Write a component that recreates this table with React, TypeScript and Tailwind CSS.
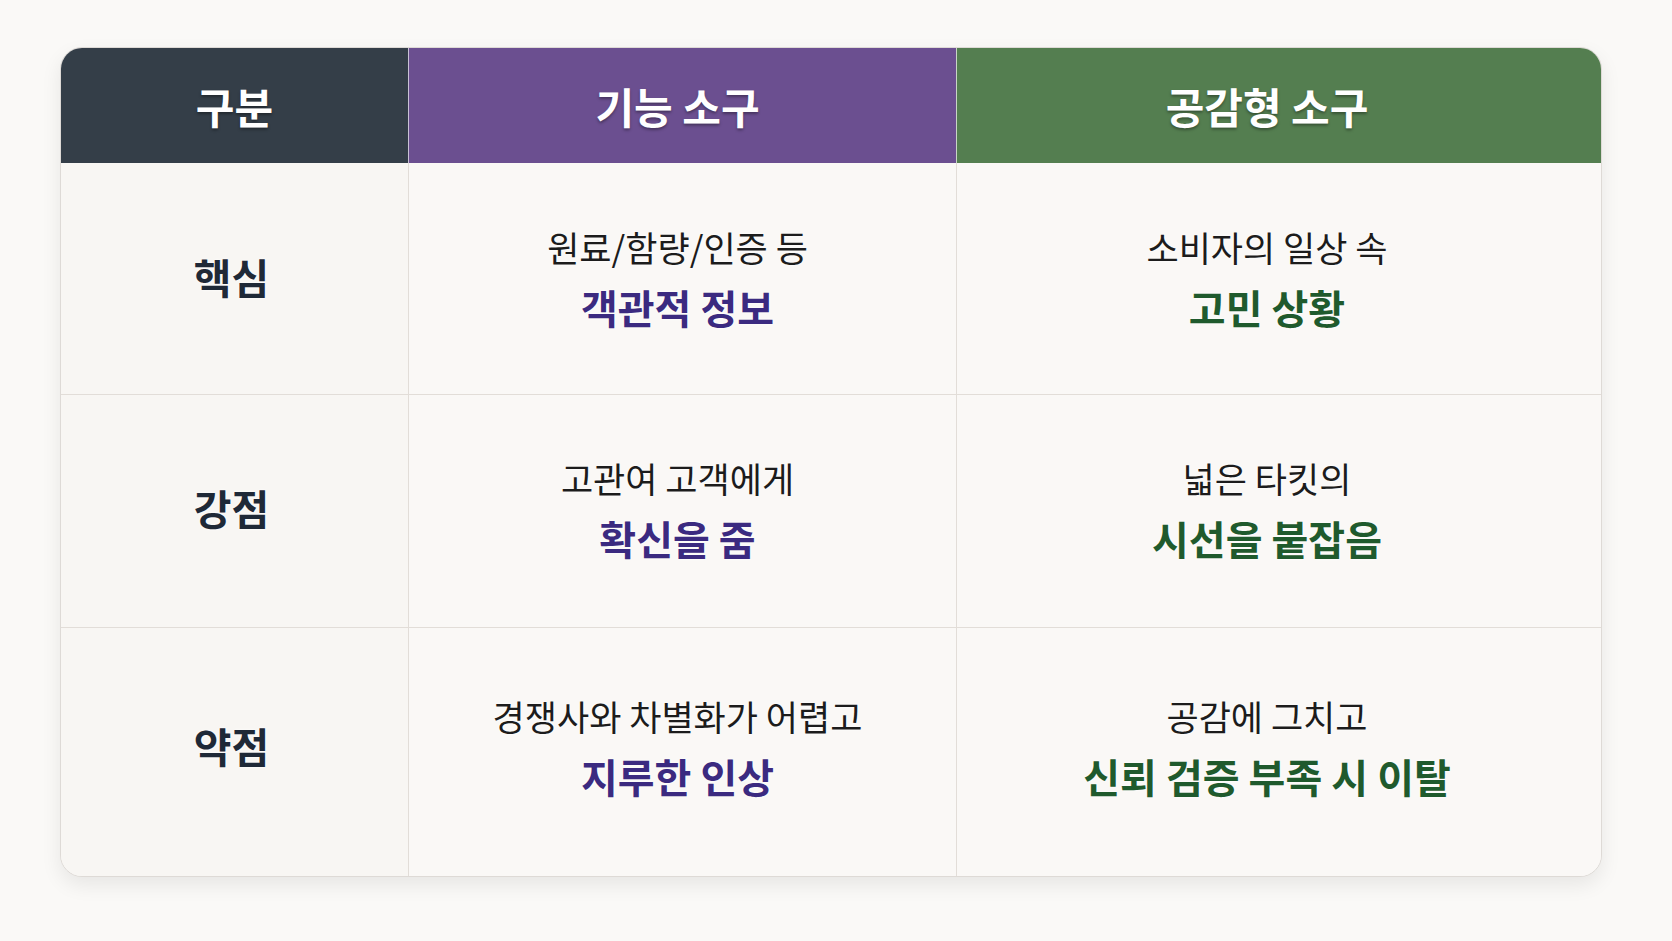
import React from "react";

type Row = {
  label: string;
  func: [string, string];
  emp: [string, string];
  height: string;
  pad: string;
};

const rows: Row[] = [
  { label: "핵심", func: ["원료/함량/인증 등", "객관적 정보"], emp: ["소비자의 일상 속", "고민 상황"], height: "h-[231px]", pad: "pb-[4px]" },
  { label: "강점", func: ["고관여 고객에게", "확신을 줌"], emp: ["넓은 타킷의", "시선을 붙잡음"], height: "h-[233px]", pad: "pb-[6px]" },
  { label: "약점", func: ["경쟁사와 차별화가 어렵고", "지루한 인상"], emp: ["공감에 그치고", "신뢰 검증 부족 시 이탈"], height: "h-[249px]", pad: "pb-[12px]" },
];

const font = { fontFamily: '"Noto Sans CJK KR", "Noto Sans", sans-serif' };

function Cell({ lines, tone, pad }: { lines: [string, string]; tone: "purple" | "green"; pad: string }) {
  return (
    <div
      className={
        tone === "purple"
          ? `flex flex-col items-center justify-center gap-[12px] border-l border-[#e2ddd8] bg-[#faf8f6] pr-[10px] ${pad}`
          : `flex flex-col items-center justify-center gap-[12px] border-l border-[#e2ddd8] bg-[#faf8f6] pr-[24px] ${pad}`
      }
    >
      <p className="text-[35px] leading-[48px] text-[#1c1c1c] [text-shadow:0_0_3px_#ffffff]">{lines[0]}</p>
      <p
        className={
          tone === "purple"
            ? "text-[40px] font-bold leading-[48px] text-[#3b2a80] [text-shadow:0_0_3px_#ffffff]"
            : "text-[40px] font-bold leading-[48px] text-[#1f5a2d] [text-shadow:0_0_3px_#ffffff]"
        }
      >
        {lines[1]}
      </p>
    </div>
  );
}

export default function App() {
  return (
    <div className="min-h-screen w-full bg-[#faf9f7] pt-[47px] pl-[60px]" style={font}>
      <div className="w-[1542px] overflow-hidden rounded-[22px] border border-[#dedad6] bg-[#faf8f6] shadow-[0_8px_20px_rgba(0,0,0,0.08)]">
        <div className="grid h-[115px] grid-cols-[347px_548px_1fr] text-white">
          <div className="flex items-center justify-center bg-[#343e48] text-[42px] font-bold [text-shadow:0_2px_3px_rgba(0,0,0,0.35)]">
            구분
          </div>
          <div className="flex items-center justify-center border-l border-[#c9c1d6] bg-[#6b4f90] pr-[10px] text-[42px] font-bold [text-shadow:0_2px_3px_rgba(0,0,0,0.35)]">
            기능 소구
          </div>
          <div className="flex items-center justify-center border-l border-[#c9d4c6] bg-[#547e50] pr-[24px] text-[42px] font-bold [text-shadow:0_2px_3px_rgba(0,0,0,0.35)]">
            공감형 소구
          </div>
        </div>
        {rows.map((row, i) => (
          <div
            key={row.label}
            className={
              i === 0
                ? `grid ${row.height} grid-cols-[347px_548px_1fr]`
                : `grid ${row.height} grid-cols-[347px_548px_1fr] border-t border-[#e2ddd8]`
            }
          >
            <div
              className={`flex items-center justify-center bg-[#f8f6f3] pr-[6px] text-[41px] font-bold text-[#1f2937] [text-shadow:0_0_3px_#ffffff] ${row.pad}`}
            >
              {row.label}
            </div>
            <Cell lines={row.func} tone="purple" pad={row.pad} />
            <Cell lines={row.emp} tone="green" pad={row.pad} />
          </div>
        ))}
      </div>
    </div>
  );
}
